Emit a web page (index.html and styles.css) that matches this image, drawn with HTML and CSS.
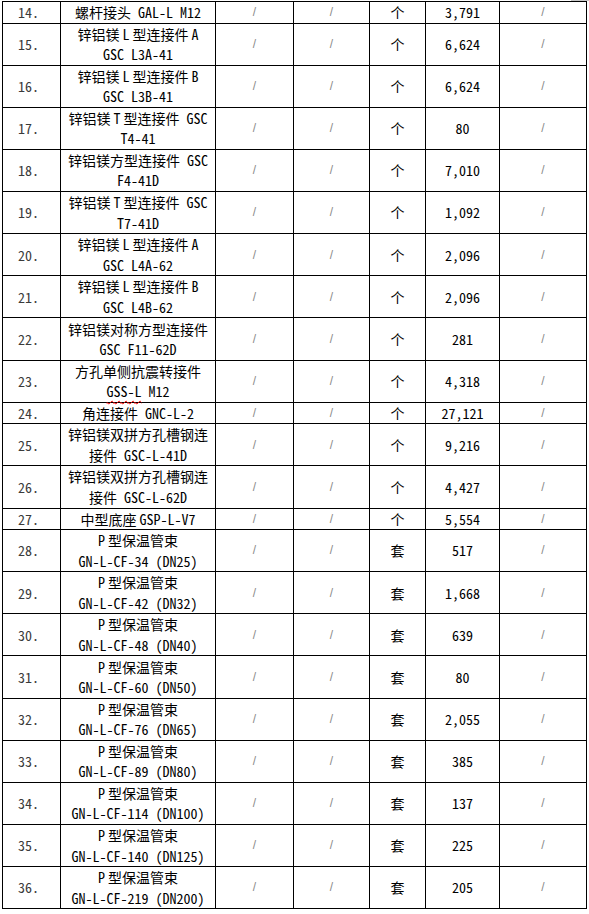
FILE: index.html
```html
<!DOCTYPE html>
<html lang="zh-CN">
<head>
<meta charset="utf-8">
<title>材料表</title>
<link rel="stylesheet" href="styles.css">
</head>
<body>
<div class="page">
  <div class="corner-mark"></div>
  <table class="sheet">
    <colgroup>
      <col class="c-no"><col class="c-name"><col class="c-a"><col class="c-b"><col class="c-unit"><col class="c-qty"><col class="c-note">
    </colgroup>
    <tbody>
      <tr class="s"><td class="no">14.</td><td class="name">螺杆接头 GAL-L M12</td><td class="sl">/</td><td class="sl">/</td><td class="unit">个</td><td class="qty">3,791</td><td class="sl">/</td></tr>
      <tr class="d"><td class="no">15.</td><td class="name">锌铝镁<span class="as">L</span>型连接件<span class="as-l">A</span><br>GSC L3A-41</td><td class="sl">/</td><td class="sl">/</td><td class="unit">个</td><td class="qty">6,624</td><td class="sl">/</td></tr>
      <tr class="d"><td class="no">16.</td><td class="name">锌铝镁<span class="as">L</span>型连接件<span class="as-l">B</span><br>GSC L3B-41</td><td class="sl">/</td><td class="sl">/</td><td class="unit">个</td><td class="qty">6,624</td><td class="sl">/</td></tr>
      <tr class="d"><td class="no">17.</td><td class="name">锌铝镁<span class="as">T</span>型连接件 GSC<br>T4-41</td><td class="sl">/</td><td class="sl">/</td><td class="unit">个</td><td class="qty">80</td><td class="sl">/</td></tr>
      <tr class="d"><td class="no">18.</td><td class="name">锌铝镁方型连接件 GSC<br>F4-41D</td><td class="sl">/</td><td class="sl">/</td><td class="unit">个</td><td class="qty">7,010</td><td class="sl">/</td></tr>
      <tr class="d"><td class="no">19.</td><td class="name">锌铝镁<span class="as">T</span>型连接件 GSC<br>T7-41D</td><td class="sl">/</td><td class="sl">/</td><td class="unit">个</td><td class="qty">1,092</td><td class="sl">/</td></tr>
      <tr class="d"><td class="no">20.</td><td class="name">锌铝镁<span class="as">L</span>型连接件<span class="as-l">A</span><br>GSC L4A-62</td><td class="sl">/</td><td class="sl">/</td><td class="unit">个</td><td class="qty">2,096</td><td class="sl">/</td></tr>
      <tr class="d"><td class="no">21.</td><td class="name">锌铝镁<span class="as">L</span>型连接件<span class="as-l">B</span><br>GSC L4B-62</td><td class="sl">/</td><td class="sl">/</td><td class="unit">个</td><td class="qty">2,096</td><td class="sl">/</td></tr>
      <tr class="d"><td class="no">22.</td><td class="name">锌铝镁对称方型连接件<br>GSC F11-62D</td><td class="sl">/</td><td class="sl">/</td><td class="unit">个</td><td class="qty">281</td><td class="sl">/</td></tr>
      <tr class="d"><td class="no">23.</td><td class="name">方孔单侧抗震转接件<br><span class="spell">GSS-L</span> M12</td><td class="sl">/</td><td class="sl">/</td><td class="unit">个</td><td class="qty">4,318</td><td class="sl">/</td></tr>
      <tr class="s"><td class="no">24.</td><td class="name">角连接件 GNC-L-2</td><td class="sl">/</td><td class="sl">/</td><td class="unit">个</td><td class="qty">27,121</td><td class="sl">/</td></tr>
      <tr class="d"><td class="no">25.</td><td class="name">锌铝镁双拼方孔槽钢连<br>接件 GSC-L-41D</td><td class="sl">/</td><td class="sl">/</td><td class="unit">个</td><td class="qty">9,216</td><td class="sl">/</td></tr>
      <tr class="d"><td class="no">26.</td><td class="name">锌铝镁双拼方孔槽钢连<br>接件 GSC-L-62D</td><td class="sl">/</td><td class="sl">/</td><td class="unit">个</td><td class="qty">4,427</td><td class="sl">/</td></tr>
      <tr class="s"><td class="no">27.</td><td class="name">中型底座<span class="as-l">GSP-L-V7</span></td><td class="sl">/</td><td class="sl">/</td><td class="unit">个</td><td class="qty">5,554</td><td class="sl">/</td></tr>
      <tr class="d"><td class="no">28.</td><td class="name"><span class="as-r">P</span>型保温管束<br>GN-L-CF-34 (DN25)</td><td class="sl">/</td><td class="sl">/</td><td class="unit">套</td><td class="qty">517</td><td class="sl">/</td></tr>
      <tr class="d"><td class="no">29.</td><td class="name"><span class="as-r">P</span>型保温管束<br>GN-L-CF-42 (DN32)</td><td class="sl">/</td><td class="sl">/</td><td class="unit">套</td><td class="qty">1,668</td><td class="sl">/</td></tr>
      <tr class="d"><td class="no">30.</td><td class="name"><span class="as-r">P</span>型保温管束<br>GN-L-CF-48 (DN40)</td><td class="sl">/</td><td class="sl">/</td><td class="unit">套</td><td class="qty">639</td><td class="sl">/</td></tr>
      <tr class="d"><td class="no">31.</td><td class="name"><span class="as-r">P</span>型保温管束<br>GN-L-CF-60 (DN50)</td><td class="sl">/</td><td class="sl">/</td><td class="unit">套</td><td class="qty">80</td><td class="sl">/</td></tr>
      <tr class="d"><td class="no">32.</td><td class="name"><span class="as-r">P</span>型保温管束<br>GN-L-CF-76 (DN65)</td><td class="sl">/</td><td class="sl">/</td><td class="unit">套</td><td class="qty">2,055</td><td class="sl">/</td></tr>
      <tr class="d"><td class="no">33.</td><td class="name"><span class="as-r">P</span>型保温管束<br>GN-L-CF-89 (DN80)</td><td class="sl">/</td><td class="sl">/</td><td class="unit">套</td><td class="qty">385</td><td class="sl">/</td></tr>
      <tr class="d"><td class="no">34.</td><td class="name"><span class="as-r">P</span>型保温管束<br>GN-L-CF-114 (DN100)</td><td class="sl">/</td><td class="sl">/</td><td class="unit">套</td><td class="qty">137</td><td class="sl">/</td></tr>
      <tr class="d"><td class="no">35.</td><td class="name"><span class="as-r">P</span>型保温管束<br>GN-L-CF-140 (DN125)</td><td class="sl">/</td><td class="sl">/</td><td class="unit">套</td><td class="qty">225</td><td class="sl">/</td></tr>
      <tr class="d"><td class="no">36.</td><td class="name"><span class="as-r">P</span>型保温管束<br>GN-L-CF-219 (DN200)</td><td class="sl">/</td><td class="sl">/</td><td class="unit">套</td><td class="qty">205</td><td class="sl">/</td></tr>
    </tbody>
  </table>
</div>
</body>
</html>
```
FILE: styles.css
```css
html, body {
  margin: 0;
  padding: 0;
  background: #ffffff;
}

body {
  font-family: "Noto Sans Mono CJK SC", "Noto Sans CJK SC", sans-serif;
  font-size: 14px;
  color: #000000;
}

.page {
  position: relative;
  padding: 1px 0 0 2px;
}

.corner-mark {
  position: absolute;
  top: 0;
  left: 571px;
  width: 18px;
  height: 1px;
  background: #c6c6c6;
}

.sheet {
  border-collapse: collapse;
  table-layout: fixed;
  width: 584px;
}

.c-no { width: 58px; }
.c-name { width: 155px; }
.c-a { width: 78px; }
.c-b { width: 76px; }
.c-unit { width: 56px; }
.c-qty { width: 74px; }
.c-note { width: 87px; }

.sheet td {
  border: 1px solid #000000;
  padding: 0;
  text-align: center;
  vertical-align: middle;
  line-height: 20.5px;
  white-space: nowrap;
}

.sheet tr.s { height: 21.1px; }
.sheet tr.d { height: 42.15px; }

.sheet td.no {
  text-align: left;
  padding-left: 15px;
  color: #3a3a3a;
}

.sheet td.sl {
  font-family: "Liberation Sans", sans-serif;
  font-size: 12px;
  color: #8a8a8a;
}

/* Word-style spacing between CJK and Latin runs */
.as { margin: 0 3px; }
.as-l { margin-left: 3px; }
.as-r { margin-right: 3px; }

.spell {
  text-decoration-line: underline;
  text-decoration-style: wavy;
  text-decoration-color: #ff0000;
  text-decoration-thickness: 1px;
  text-underline-offset: 3px;
  text-decoration-skip-ink: none;
}
```
